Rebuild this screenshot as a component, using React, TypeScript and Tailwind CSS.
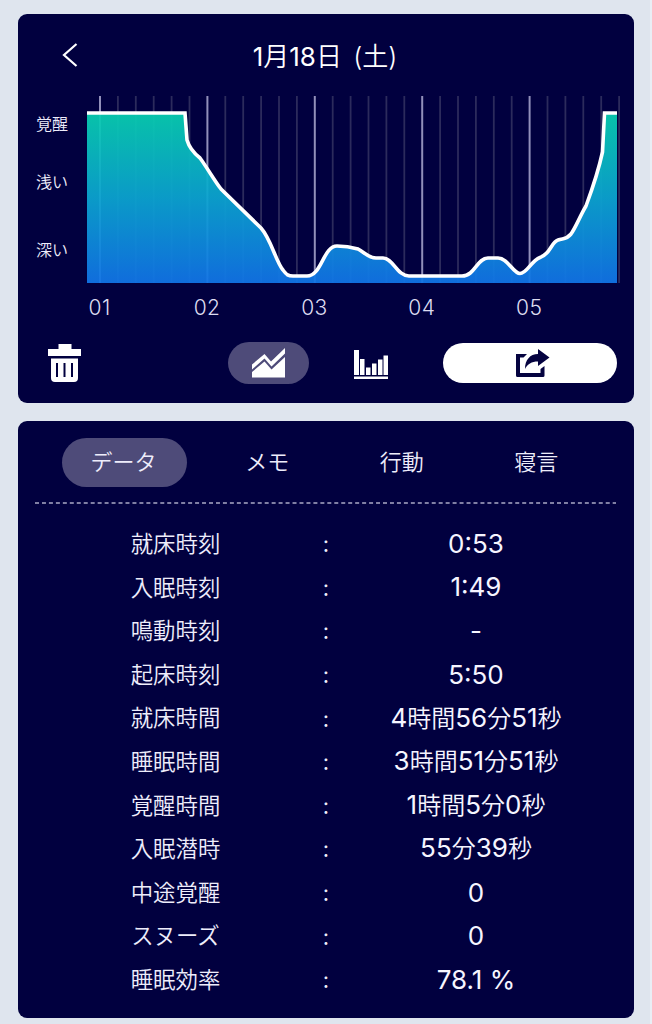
import clsx from 'clsx';

const hours = ['01', '02', '03', '04', '05'];

const tabs = ['データ', 'メモ', '行動', '寝言'];

const rows = [
  { label: '就床時刻', value: '0:53' },
  { label: '入眠時刻', value: '1:49' },
  { label: '鳴動時刻', value: '-' },
  { label: '起床時刻', value: '5:50' },
  { label: '就床時間', value: '4時間56分51秒' },
  { label: '睡眠時間', value: '3時間51分51秒' },
  { label: '覚醒時間', value: '1時間5分0秒' },
  { label: '入眠潜時', value: '55分39秒' },
  { label: '中途覚醒', value: '0' },
  { label: 'スヌーズ', value: '0' },
  { label: '睡眠効率', value: '78.1 %' }
];

// one line every ten minutes, the full hours are brighter
const gridLines = Array.from({ length: 30 }, (_, i) => ({ x: 13 + i * 17.9, major: i % 6 === 0 }));

const curve =
  'M0 17H98L100 44C102 51 108 58 113 62C121 73 127 84 134 93L174 132C184 143 189 166 196 174C200 179 201 180 206 180H220C235 180 236 150 250 150C257 150 264 151 271 153C278 157 282 162 289 162H296C306 162 310 180 322 180H375C388 180 390 162 401 162H411C421 162 426 177.500 433 177.500C440 177.500 444 165 453 161.500C464 158 464 146 471 144C476 142 479 144 484 138C489 131 493 120 499 110C506 91 511 77 515.500 56L517.500 17H530';

function SleepChart() {
  return (
    <svg width="534" height="188" viewBox="0 0 534 188" className="block">
      <defs>
        <linearGradient id="sleep" x1="0" y1="17" x2="0" y2="187" gradientUnits="userSpaceOnUse">
          <stop offset="0" stopColor="#08ceb0" />
          <stop offset="0.5" stopColor="#0ba4d0" />
          <stop offset="1" stopColor="#1174e6" />
        </linearGradient>
      </defs>
      {gridLines.map((line) => (
        <path
          key={line.x}
          d={`M${line.x} 0V187`}
          stroke={line.major ? '#9290ba' : '#2c2b5c'}
          strokeWidth={line.major ? 2 : 1.8}
        />
      ))}
      <path d={`${curve}V187H0Z`} fill="url(#sleep)" fillOpacity="0.94" />
      <path d={curve} fill="none" stroke="#fff" strokeWidth="3.600" strokeLinejoin="miter" />
    </svg>
  );
}

function TrashIcon() {
  return (
    <svg width="34" height="39" viewBox="0 0 34 39" fill="#fff">
      <path d="M0 5H10.500V0H23.500V5H33V12H0Z" />
      <path
        fillRule="evenodd"
        d="M3 14.500H30V34Q30 38 26 38H7Q3 38 3 34ZM8 19V33H10V19ZM15.500 19V33H17.500V19ZM23 19V33H25V19Z"
      />
    </svg>
  );
}

function AreaIcon() {
  return (
    <svg width="34" height="30" viewBox="0 0 34 30" fill="#fff">
      <path d="M0 16.500L12.500 6L19 13.500L33 0V5.500L19.500 18.500L12.500 10.500L0 21.500Z" />
      <path d="M0 24L12.500 13.500L19.500 21.500L33 9V29.500H0Z" />
    </svg>
  );
}

function BarsIcon() {
  return (
    <svg width="35" height="30" viewBox="0 0 35 30" fill="#fff">
      <path d="M0 0H5V25H0ZM6 9H10.500V25H6ZM12 17.500H16.500V25H12ZM18 13.500H22.500V25H18ZM24 9.500H28.500V25H24ZM29.500 5.500H34V25H29.500ZM0 26.500H34V29H0Z" />
    </svg>
  );
}

function ShareIcon() {
  return (
    <svg width="34" height="29" viewBox="0 0 34 29" fill="#050340">
      <path d="M0 5H11L7.500 8.500H4V24H24.500V20L28.500 17V26.500Q28.500 28 27 28H1.500Q0 28 0 26.500Z" />
      <path d="M22 0L33.500 8.500L22 17V12.500C15.500 12.500 11.500 15 9 20C9 11 14 5 22 5Z" />
    </svg>
  );
}

// units are set a little smaller than the digits
function Value({ text }: { text: string }) {
  return (
    <>
      {text.split(/([時間分秒]+)/).map((part, i) =>
        i % 2 ? (
          <span key={i} className="text-[24px] font-[350]">
            {part}
          </span>
        ) : (
          part
        )
      )}
    </>
  );
}

export default function App() {
  return (
    <div className="h-[1024px] w-[652px] border-r-2 border-[#e9eef5] bg-[#dfe5ee] pt-[14px] pl-[18px] font-['Inter','Noto_Sans_CJK_JP',sans-serif] text-[#eeedfb]">
      <section className="flex h-[389px] w-[616px] flex-col rounded-[9px] bg-[#01003f]">
        <header className="grid h-[82px] grid-cols-3 items-center">
          <button type="button" aria-label="戻る" className="ml-11">
            <svg width="16" height="24" viewBox="0 0 16 24" fill="none" stroke="#fff" strokeWidth="2.200">
              <path d="M14.500 1L2 12L14.500 23" />
            </svg>
          </button>
          <h1 className="-ml-0.5 pt-0.5 text-center text-[26px] font-normal whitespace-nowrap text-white">
            1<span className="font-[350]">月</span>18<span className="font-[350]">日</span>{' '}
            <span className="ml-1 font-[350]">(土)</span>
          </h1>
        </header>

        <div className="flex">
          <div className="flex w-[69px] flex-col pt-[16px] pl-[18px] text-[16px] leading-6 font-[350]">
            <span>覚醒</span>
            <span className="mt-[34px]">浅い</span>
            <span className="mt-[44px]">深い</span>
          </div>
          <SleepChart />
        </div>

        <div className="ml-[28px] flex h-[46px] items-center pt-px text-[21px] tracking-[0.5px] text-[#dddcf0]">
          {hours.map((hour) => (
            <span key={hour} className="w-[107.400px] text-center font-[350]">
              {hour}
            </span>
          ))}
        </div>

        <div className="mt-3 flex h-[42px] items-center pl-[30px]">
          <button type="button" aria-label="削除">
            <TrashIcon />
          </button>
          <button
            type="button"
            aria-label="折れ線"
            className="ml-[146px] flex h-[42px] w-[81px] items-center justify-center rounded-full bg-[#4e4b79]"
          >
            <AreaIcon />
          </button>
          <button type="button" aria-label="棒" className="ml-[45px] pt-1">
            <BarsIcon />
          </button>
          <button
            type="button"
            aria-label="共有"
            className="ml-[54px] flex h-10 w-[174px] items-center justify-center rounded-full bg-white pt-px pl-1.5"
          >
            <ShareIcon />
          </button>
        </div>
      </section>

      <section className="mt-[18px] h-[597px] w-[616px] rounded-[9px] bg-[#01003f] pt-[17px]">
        <nav className="flex h-[49px] pl-11 text-[22px] font-[350]">
          {tabs.map((tab, i) => (
            <button
              key={tab}
              type="button"
              className={clsx(
                'flex items-center justify-center',
                i === 0 ? 'mr-[13px] w-[125px] rounded-full bg-[#4e4b79] pr-0.5' : 'w-[134.500px]'
              )}
            >
              {tab}
            </button>
          ))}
        </nav>
        <svg width="582" height="2" className="mt-[15px] ml-[17px] block">
          <path d="M0 1H581" stroke="#aaa9c6" strokeWidth="1.500" strokeDasharray="4 2.960" />
        </svg>

        <dl className="mt-[18px] ml-[83px] w-[450px]">
          {rows.map((row) => (
            <div key={row.label} className="grid h-[43.600px] grid-cols-3 items-center text-center whitespace-nowrap">
              <dt className="pr-px text-[22.400px] font-[350]">{row.label}</dt>
              <span className="pt-0.5 text-[22px]">:</span>
              <dd className="flex items-baseline justify-center text-[26px] leading-9 font-normal whitespace-pre text-[#f6f5ff]">
                <Value text={row.value} />
              </dd>
            </div>
          ))}
        </dl>
      </section>
    </div>
  );
}
